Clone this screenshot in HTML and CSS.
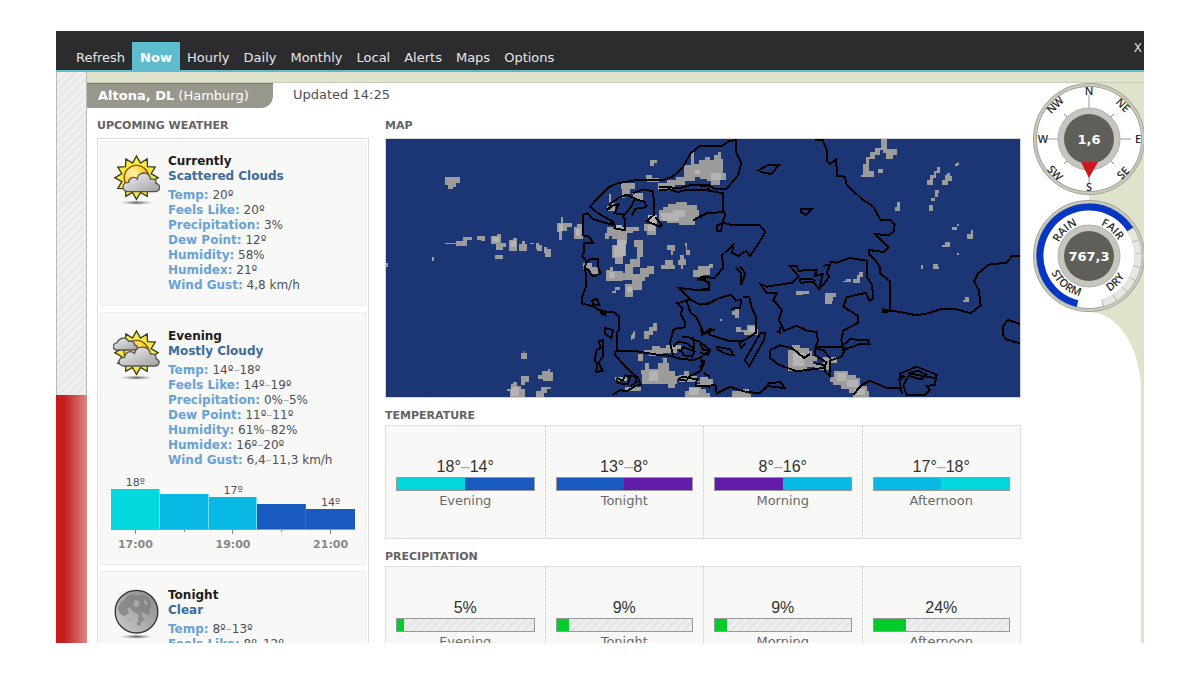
FILE: index.html
```
<!DOCTYPE html>
<html lang="en">
<head>
	<meta charset="utf-8">
	<title>Weather - Altona, DL</title>
	<link rel="stylesheet" href="styles.css">
</head>
<body>
<div id="app">
	<header id="toolbar">
		<nav>
			<a href="#refresh">Refresh</a>
			<a href="#now" class="active">Now</a>
			<a href="#hourly">Hourly</a>
			<a href="#daily">Daily</a>
			<a href="#monthly">Monthly</a>
			<a href="#local">Local</a>
			<a href="#alerts">Alerts</a>
			<a href="#maps">Maps</a>
			<a href="#options">Options</a>
		</nav>
		<button type="button" id="close">X</button>
	</header>
	<div id="page">
		<div id="rail">
			<div class="stripes"></div>
			<div class="red"></div>
		</div>
		<main id="sheet">
			<div id="content">
				<div id="location_bar">
					<h1><b>Altona, DL</b> (Hamburg)</h1>
					<span id="updated">Updated 14:25</span>
				</div>
				<div id="columns">
					<section id="upcoming">
						<h2>Upcoming Weather</h2>
						<div class="list">
							<article class="card">
								<div class="forecast">
									<svg class="icon" viewBox="-70 -68 140 156">
										<defs>
											<radialGradient id="sun" cx="35%" cy="30%" r="75%">
												<stop offset="0" stop-color="#fff6c0"/><stop offset=".5" stop-color="#ffd53a"/><stop offset="1" stop-color="#f39a10"/>
											</radialGradient>
											<linearGradient id="cloud" x2="1" y2="1">
												<stop offset="0" stop-color="#f2f2f2"/><stop offset="1" stop-color="#a0a0a0"/>
											</linearGradient>
											<radialGradient id="shade">
												<stop offset="0" stop-color="#555"/><stop offset="1" stop-color="#999" stop-opacity="0"/>
											</radialGradient>
											<path id="rays" d="M0-65L12-44L32-56L33-33L56-32L44-12L65 0L44 12L56 32L33 33L32 56L12 44L0 65L-12 44L-32 56L-33 33L-56 32L-44 12L-65 0L-44-12L-56-32L-33-33L-32-56L-12-44Z"/>
											<path id="puff" d="M-24 42C-46 42-46 14-24 14C-22-2-6-4 2 4C4-18 38-22 42 4C58 2 60 12 58 17C76 20 72 42 54 42Z"/>
										</defs>
										<ellipse cy="75" rx="50" ry="7" fill="url(#shade)"/>
										<use href="#rays" fill="#fbe93f" stroke="#3c3a20" stroke-width="4"/>
										<circle r="37" fill="url(#sun)" stroke="#7a5200" stroke-width="4"/>
										<use href="#puff" fill="url(#cloud)" stroke="#555" stroke-width="4"/>
									</svg>
									<div class="details">
										<h3>Currently</h3>
										<h4>Scattered Clouds</h4>
										<dl>
											<div><dt>Temp:</dt> <dd>20º</dd></div>
											<div><dt>Feels Like:</dt> <dd>20º</dd></div>
											<div><dt>Precipitation:</dt> <dd>3%</dd></div>
											<div><dt>Dew Point:</dt> <dd>12º</dd></div>
											<div><dt>Humidity:</dt> <dd>58%</dd></div>
											<div><dt>Humidex:</dt> <dd>21º</dd></div>
											<div><dt>Wind Gust:</dt> <dd>4,8 km/h</dd></div>
										</dl>
									</div>
								</div>
							</article>
							<article class="card">
								<div class="forecast">
									<svg class="icon" viewBox="-70 -68 140 156">
										<ellipse cy="75" rx="50" ry="7" fill="url(#shade)"/>
										<use href="#rays" fill="#fbe93f" stroke="#3c3a20" stroke-width="4"/>
										<circle r="37" fill="url(#sun)" stroke="#7a5200" stroke-width="4"/>
										<path d="M-60-8C-74-10-72-28-58-30C-52-46-30-48-24-34C-12-38-4-28-6-23C6-22 6-8-4-8Z" fill="url(#cloud)" stroke="#555" stroke-width="4"/>
										<path d="M-38 40C-60 38-56 14-36 14C-32-6-14-6-6 2C0-24 38-22 42 4C56 2 60 12 58 18C74 24 68 40 54 40Z" fill="url(#cloud)" stroke="#555" stroke-width="4"/>
									</svg>
									<div class="details">
										<h3>Evening</h3>
										<h4>Mostly Cloudy</h4>
										<dl>
											<div><dt>Temp:</dt> <dd>14º<i>–</i>18º</dd></div>
											<div><dt>Feels Like:</dt> <dd>14º<i>–</i>19º</dd></div>
											<div><dt>Precipitation:</dt> <dd>0%<i>–</i>5%</dd></div>
											<div><dt>Dew Point:</dt> <dd>11º<i>–</i>11º</dd></div>
											<div><dt>Humidity:</dt> <dd>61%<i>–</i>82%</dd></div>
											<div><dt>Humidex:</dt> <dd>16º<i>–</i>20º</dd></div>
											<div><dt>Wind Gust:</dt> <dd>6,4<i>–</i>11,3 km/h</dd></div>
										</dl>
									</div>
								</div>
								<div class="chart">
									<div class="hour"><span>18º</span><div class="bar aqua" style="height:40px"></div></div>
									<div class="hour"><div class="bar sky" style="height:35px"></div></div>
									<div class="hour"><span>17º</span><div class="bar sky" style="height:32px"></div></div>
									<div class="hour"><div class="bar blue" style="height:25px"></div></div>
									<div class="hour"><span>14º</span><div class="bar blue" style="height:20px"></div></div>
								</div>
								<div class="axis">
									<span class="tick">17:00</span>
									<span></span>
									<span class="tick">19:00</span>
									<span></span>
									<span class="tick">21:00</span>
								</div>
							</article>
							<article class="card">
								<div class="forecast">
									<svg class="icon" viewBox="-70 -68 140 156">
										<defs>
											<linearGradient id="moon" x1="1" x2="0" y2="1">
												<stop offset="0" stop-color="#888"/><stop offset="1" stop-color="#ccc"/>
											</linearGradient>
										</defs>
										<ellipse cy="75" rx="50" ry="7" fill="url(#shade)"/>
										<circle r="64" fill="url(#moon)" stroke="#333" stroke-width="4"/>
										<path d="M-36-36C-28-52-8-56 4-48C24-56 48-40 44-14L38-6L42 8C30 12 26 2 14 2L18 16L24 22L10 36L4 22L8 8L-10 2L-20-14L-28-8L-22 4L-36 14L-50 6L-56-10L-48-28ZM4 28L14 38L6 44L0 36Z" fill="#7c7c7c" opacity=".7"/>
										<path d="M-4-36L10-30L4-14L-10-18ZM22-38L34-24L26-20ZM-24 20L-14 26L-22 34Z" fill="#aaa"/>
									</svg>
									<div class="details">
										<h3>Tonight</h3>
										<h4>Clear</h4>
										<dl>
											<div><dt>Temp:</dt> <dd>8º<i>–</i>13º</dd></div>
											<div><dt>Feels Like:</dt> <dd>8º<i>–</i>12º</dd></div>
										</dl>
									</div>
								</div>
							</article>
						</div>
					</section>
					<div id="overview">
						<section>
							<h2>Map</h2>
							<svg id="map" viewBox="18 27 1902 774" preserveAspectRatio="none" shape-rendering="crispEdges">
								<rect x="18" y="27" width="1902" height="774" fill="#1c3575"/>
								<!-- clouds, west -->
								<g fill="#9c9c9c">
									<path d="M195 141H240V158H228V170H220V178H203V165H195ZM195 338H228V332H250V320H276V330H262V348H228V342H195ZM290 318H316V334H302V330H290ZM334 318H350V313H362V340H378V352H370V360H348V342H334ZM346 374H368V387H346ZM386 330H400V324H412V362H386ZM418 343H426V333H434V343H442V362H418ZM450 338H462V342H450ZM468 340H478V346H486V362H472V356H468ZM492 350H502V358H512V382H494V370H492Z"/>
									<path d="M532 280H544V262H549V280H575V292H560V304H545V330H538V306H532ZM582 290H592V282H610V326H582ZM18 400H24V412H18ZM157 382H163V394H157ZM810 90H830V100H822V108H810ZM798 136H816V144H838V156H800ZM424 678V670H432V664H436V670H442V686H424ZM424 738H448V756H434V764H424ZM474 736H486V724H504V718H510V726H518V752H490V746H474ZM382 776H392V762H398V756H410V768H424V778H434V801H390V784H382ZM468 784H482V770H512V778H500V790H492V801H468Z"/>
									<path d="M686 192H694V220H704V244H680V228H686ZM722 160H764V178H750V192H736V204H726V178H722ZM756 188H790V210H764ZM834 176V158H862V150H888V140H912V104H934V66H942V102H958V90H976V82H990V148H964V140H944V154H916V166H884V178H860V184H838ZM836 240H850V230H864V222H888V216H920V224H950V240H958V262H944V284H896V278H860V272H838Z"/>
									<path d="M674 310H682V292H700V298H720V290H778V304H760V310H742V342H738V378H730V402H706V384H696V346H712V326H696V318H686V328H674ZM792 282H808V254H830V286H828V316H802V304H792ZM762 330H790V382H780V410H760V432H780V414H800V408H822V432H808V440H796V452H786V480H758V500H736V462H756V450H730V430H736V402H750V386H770V350H762ZM678 420H690V412H700V424H728V454H678ZM697 484H706V470H720V480H708V490H697ZM608 398H636V412H654V432H630V418H608Z"/>
									<path d="M862 344H886V364H880V374H872V360H862ZM916 338H922V360H930V376H918ZM894 390H900V376H912V388H918V406H908V418H902V406H894ZM844 404H856V390H880V404H886V418H844ZM938 420H954V408H990V436H964V440H938ZM752 618L764 602V624L754 630ZM792 604H808V590H820V580H830V604H818V616H808V628H792ZM774 672H790V692H774ZM792 660H816V648H840V654H858V644H902V656H890V668H850V678H808V668H792ZM784 720H796V700H806V716H834V700H850V688H846V684H862V700H868V722H884V738H896V750H892V762H884V774H864V762H846V762H786ZM896 736H912V724H926V738H950V752H990V766H960V756H896ZM914 784H928V770H944V762H964V776H978V788H990V801H914ZM706 740H740V752H706ZM734 770H784V782H734Z"/>
								</g>
								<g fill="#b4b4b4">
									<path d="M710 330H738V350H734V374H712ZM702 348H728V380H702ZM686 426H706V444H686ZM740 470H756V486H740ZM804 256H828V280H804ZM840 250H880V240H916V262H896V272H850ZM394 332H408V350H394ZM340 322H358V336H340ZM538 282H550V302H538ZM588 296H600V318H588ZM394 770H416V798H394ZM706 286H726V298H706ZM808 724H834V752H808ZM944 120H976V132H944ZM928 774H956V796H928ZM804 284H824V302H804Z"/>
								</g>
								<!-- clouds, east -->
								<g transform="translate(960)" fill="#9c9c9c">
									<path d="M20 100H30V90H42V76H54V66H64V88H68V130H78V150H60V166H34V154H22V146H0V114H20ZM0 408H26V402H40V414H28V428H10V438H0ZM96 544H104V536H118V564H106V556H96ZM60 566H66V572H60ZM108 592H124V600H142V584H168V598H174V616H132V606H108ZM0 740H24V748H38V764H0ZM97 784H130V776H148V792H154V801H97Z"/>
									<path d="M542 27H560V58H592V76H580V88H558V70H548V60H540V76H524V88H508V124H522V142H484V134H490V102H498V82H510V66H524V54H542ZM534 116H548V128H534ZM680 150H690V134H702V122H712V110H720V130H708V144H700V164H680ZM726 150H734V136H740V128H750V138H756V154H744V166H726ZM764 104L776 96V104L768 110ZM706 180H718V190H714V200H706ZM694 204H706V212H694ZM586 230H592V216H600V242H586ZM688 224H700V242H688ZM756 292H770V300H756ZM770 282H776V288H770ZM802 312H812V300H820V326H802ZM726 344H734V337H750V350H726ZM770 370H776V376H770ZM662 406H668V418H662ZM700 402H714V410H718V418H700ZM788 510H796V502H808V516H788Z"/>
									<path d="M428 452H438V446H452V456H428ZM460 446H470V434H478V426H490V440H480V458H460ZM288 482H326V492H308V496H288ZM376 490H408V502H400V514H396V522H376ZM264 660H276V644H300V654H328V664H336V678H350V692H340V702H370V680H410V700H388V720H346V710H322V722H264ZM390 740H402V722H444V734H468V744H480V768H500V782H508V801H458V788H446V778H424V766H398V756H390Z"/>
									<path fill="#b4b4b4" d="M34 128H64V150H34ZM280 668H312V708H280ZM146 590H166V606H146ZM410 728H438V754H410ZM440 750H474V772H440ZM464 776H494V796H464Z"/>
								</g>
								<!-- coastlines, west -->
								<g class="coast">
									<path d="M990 48H960L932 70L908 112L878 140L850 150H770L712 160L686 172L664 194L630 230L652 248L690 270L696 284L640 268L624 250L610 254V316L628 320L640 340L612 338V368L606 378L618 392L616 410L618 470L606 500V520L640 530L668 546L700 546L716 558V600L710 610V662L770 664L832 674L880 678L870 640L880 600L896 594L914 592V576L902 552L908 534L890 520L912 514L930 508L896 474L950 480L990 476"/>
									<path d="M688 240L690 222L716 204L740 194L766 206L752 232L734 254L704 250L716 222L700 226L680 240M690 268L702 280L706 296L734 300V266L726 256M758 190L790 178L820 184L822 254L800 274L840 290L846 284L826 262M836 180L870 178L892 186L920 180H950L990 178M838 170L900 174L930 166L990 164M756 256L766 236L790 234L800 226L790 214L766 208M940 272L960 258L990 246"/>
									<path d="M618 400L630 388H654V410L662 430L640 440L628 424L612 410M636 512L650 506L658 524L640 524ZM660 540L676 544V556L664 550ZM676 594L700 600L694 624L676 612ZM668 630L656 634L662 654L650 660L644 690L652 704L648 726L668 722L656 698L668 680ZM706 664V676L740 714L774 744L782 764L766 768L740 784L720 780L698 796M710 744L728 752L736 736L750 742L744 762L714 760L708 748M740 740L764 736L770 756L750 770M920 514L932 548L948 560L960 584L966 614L990 604M930 508L960 524L990 520M952 446L972 448L990 466M950 450L990 440"/>
									<path d="M880 650L896 634L920 640L942 656L940 624L906 620M896 664L912 652L944 664L936 680L912 676L900 658M880 680L900 686L940 690L960 684L990 660L960 636L930 624M960 690L972 700L960 724L930 738L918 752L896 748L906 740L950 748L948 768L990 770M972 730L990 740"/>
								</g>
								<!-- coastlines, east -->
								<g class="coast" transform="translate(960)">
									<path d="M0 48H66L86 34L108 30V66L124 100L114 136L80 176L48 178L30 168H0M0 178L40 184L70 190V244L76 256L66 280L50 288L52 304L64 302L66 278L92 284H178L196 306L176 340L150 378L138 362L116 378L96 368L100 344L66 376L70 412L44 444L0 440M0 262L20 250L70 246M0 448L26 456V480H0M170 124L206 104L236 106L214 132L180 126M302 236H336L318 254L304 248Z"/>
									<path d="M346 30H368L380 60V94L390 102L408 88L412 138L434 140L440 164L486 208L520 230L542 270H572L584 284L582 304L566 316L526 312L566 352L552 366L506 360V372L524 388L540 412V430L570 454V544L550 546V538L600 546L650 556L684 550L720 538H770L812 550L842 526L836 480L822 454L834 430L866 404L920 398L936 378H960M960 582L924 570L908 590V612L918 628L960 640"/>
									<path d="M386 396L410 398L448 384L500 392V440L516 464L520 506L508 512L498 488L440 502L430 530L474 558V578L430 602L424 630L430 660L480 642H508L504 630L450 628L424 650L380 650L346 652L354 632L350 606L322 602L290 588L252 602L236 570L246 540L220 510L230 490L200 490L182 462L200 470L278 458L296 440L270 408H290L296 422L350 420L344 438L368 432L358 478L340 456L302 458L300 446H336L346 454M368 408L390 404L380 430L388 440L364 472M0 524L30 518L60 504L94 494L108 512L124 510L120 534L92 536M130 500L148 500L154 530L168 560V608L150 620L130 632L84 632L28 614L30 600L46 598M120 410L136 430L124 464V430L108 414M0 584L12 610L30 596L46 602M230 602L240 610V592"/>
									<path d="M196 608L182 608L134 692L148 708L192 630ZM132 630L118 640L124 654L136 640M50 650L90 658L102 676L78 672L52 658ZM0 640L10 660L30 662L24 674L0 668M0 690L12 694L0 712M210 660L240 646L276 654L312 684L330 672M210 660V684L236 704L290 724L370 714L380 698L346 676L344 656L370 660L394 690L424 680L440 650M390 690V738L376 726V706L346 700M0 768L46 766L50 790L90 770L130 784L180 790L200 768L254 774L242 756L206 760L196 778M460 794L486 764L510 752L560 774H600L606 790L598 750L612 740L600 736V750M598 732L650 710L710 734L704 764L680 768L690 780L674 796H620L610 766L626 738L664 748L678 734L656 722L624 730L704 744"/>
								</g>
							</svg>
						</section>
						<section>
							<h2>Temperature</h2>
							<div class="periods">
								<div class="period"><strong>18°<i>–</i>14°</strong><div class="meter"><div class="aqua"></div><div class="blue"></div></div><span>Evening</span></div>
								<div class="period"><strong>13°<i>–</i>8°</strong><div class="meter"><div class="blue"></div><div class="purple"></div></div><span>Tonight</span></div>
								<div class="period"><strong>8°<i>–</i>16°</strong><div class="meter"><div class="purple"></div><div class="sky"></div></div><span>Morning</span></div>
								<div class="period"><strong>17°<i>–</i>18°</strong><div class="meter"><div class="sky"></div><div class="aqua"></div></div><span>Afternoon</span></div>
							</div>
						</section>
						<section>
							<h2>Precipitation</h2>
							<div class="periods">
								<div class="period"><strong>5%</strong><div class="meter rain"><div style="width:5%"></div></div><span>Evening</span></div>
								<div class="period"><strong>9%</strong><div class="meter rain"><div style="width:9%"></div></div><span>Tonight</span></div>
								<div class="period"><strong>9%</strong><div class="meter rain"><div style="width:9%"></div></div><span>Morning</span></div>
								<div class="period"><strong>24%</strong><div class="meter rain"><div style="width:24%"></div></div><span>Afternoon</span></div>
							</div>
						</section>
					</div>
				</div>
			</div>
			<aside id="gauges">
				<svg class="gauge" viewBox="-56 -56 112 112">
					<circle r="54" fill="#fff" stroke="#a3a497" stroke-width="4"/>
					<circle r="54" fill="none" stroke="#cbccc0" stroke-width="2"/>
					<path d="M0-44V44M-42 0H42M-25-25L25 25M-25 25L25-25" stroke="#999"/>
					<circle r="31" fill="#c6c6be" stroke="#b2b2a9"/>
					<circle r="25" fill="#5f5f5a"/>
					<path d="M-8 23H9L0 39Z" fill="#c81a1e"/>
					<g class="points">
						<text y="-44">N</text>
						<text x="49" y="4">E</text>
						<text y="52">S</text>
						<text x="-46" y="4">W</text>
						<text transform="rotate(45)translate(0 -44)">NE</text>
						<text transform="rotate(-45)translate(0 -44)">NW</text>
						<text transform="rotate(45)translate(0 52)">SW</text>
						<text transform="rotate(-45)translate(0 52)">SE</text>
					</g>
					<text class="reading" y="5">1,6</text>
				</svg>
				<svg class="gauge" viewBox="-56 -56 112 112">
					<defs>
						<path id="upper" d="M-33 0A33 33 0 0 1 33 0"/>
						<path id="lower" d="M-41 0A41 41 0 0 0 41 0"/>
					</defs>
					<circle r="54" fill="#fff" stroke="#a3a497" stroke-width="4"/>
					<circle r="54" fill="none" stroke="#cbccc0" stroke-width="2"/>
					<g fill="none" stroke-width="7">
						<path d="M-11.5 47.6A49 49 0 1 1 41.3-26.3" stroke="#0536c4"/>
						<path d="M41.3-26.3A49 49 0 0 1 13.1 47.2" stroke="#bcbdb3"/>
						<path d="M41.3-26.3A49 49 0 0 1 13.1 47.2" stroke="#e6e7e0" stroke-dasharray="12 1"/>
					</g>
					<circle r="31" fill="#c6c6be" stroke="#b2b2a9"/>
					<circle r="25" fill="#5f5f5a"/>
					<g class="points">
						<text><textPath href="#upper" startOffset="26%">RAIN</textPath></text>
						<text><textPath href="#upper" startOffset="73%">FAIR</textPath></text>
						<text><textPath href="#lower" startOffset="28%">STORM</textPath></text>
						<text><textPath href="#lower" startOffset="75%">DRY</textPath></text>
					</g>
					<text class="reading" y="5">767,3</text>
				</svg>
				<div class="curve"></div>
			</aside>
		</main>
	</div>
</div>
</body>
</html>
```

FILE: styles.css
```
* {
	box-sizing: border-box;
}
body {
	margin: 0;
	padding: 31px 56px 32px;
	background-color: white;
	color: #4d5057;
	font-family: Verdana, "DejaVu Sans", sans-serif;
	font-size: 13px;
}
h1, h2, h3, h4, dl, dd {
	margin: 0;
	font-size: inherit;
}
i {
	color: #aaa;
	font-style: normal;
}

#app {
	display: flex;
	flex-direction: column;
	height: calc(100vh - 63px);
	overflow: hidden;
}

/* toolbar */
#toolbar {
	display: flex;
	flex: none;
	justify-content: space-between;
	height: 41px;
	padding-left: 13px;
	background-color: #2c2c2e;
	border-bottom: 2px solid #5fbccf;
}
nav {
	display: flex;
	align-self: flex-end;
}
nav a {
	height: 28px;
	padding: 2px 7px 0;
	color: #e6e6e6;
	line-height: 28px;
	text-decoration: none;
}
nav a.active {
	padding: 2px 8px 0;
	background-color: #5fbccf;
	color: white;
	font-weight: bold;
}
#close {
	padding: 0 2px 6px;
	border: 0;
	background: none;
	color: #ddd;
	font-family: inherit;
	font-size: 12px;
}

#page {
	display: flex;
	flex: 1;
	min-height: 0;
}
#rail {
	display: flex;
	flex-direction: column;
	flex: none;
	width: 31px;
}
.stripes {
	flex: 323;
	border: solid #bbb;
	border-width: 0 1px;
	background: repeating-linear-gradient(135deg, #e9e9e9 0 3px, #f0f0f0 3px 6px);
}
.red {
	flex: 248;
	background: linear-gradient(to right, #c51d1c 25%, #dc8585);
}
#sheet {
	display: flex;
	flex: 1;
	min-width: 0;
	padding-top: 10px;
	background-color: #dfe3cb;
}
#content {
	flex: 1;
	min-width: 0;
	padding-right: 12px;
	border-top: 1px solid #c9ccb4;
	background-color: white;
}

#location_bar {
	display: flex;
	line-height: 24px;
}
h1 {
	width: 186px;
	height: 25px;
	padding-left: 11px;
	border-top: 1px solid #7d7c72;
	border-radius: 0 0 12px 0;
	background-color: #98978c;
	color: white;
	font-weight: normal;
	line-height: 23px;
	white-space: nowrap;
}
#updated {
	padding-left: 20px;
}

#columns {
	display: flex;
	gap: 16px;
	padding-left: 10px;
}
#upcoming {
	flex: none;
	width: 272px;
}
#overview {
	flex: 1;
	min-width: 0;
}
h2 {
	padding: 10px 0 1px;
	color: #636363;
	font-size: 11px;
	line-height: 16px;
	text-transform: uppercase;
}
#upcoming h2, #overview section:first-child h2 {
	padding-bottom: 4px;
}

/* upcoming weather */
.list {
	display: flex;
	flex-direction: column;
	gap: 6px;
	padding: 2px;
	border: 1px solid #ddd;
}
.card {
	padding: 12px 10px;
	border: 1px solid #eee;
	background-color: #f8f8f6;
	font-size: 12px;
	line-height: 15px;
}
.card + .card {
	padding-top: 16px;
}
.forecast {
	display: flex;
	gap: 8px;
}
.icon {
	flex: none;
	width: 47px;
	height: 52px;
	margin: 1px 0 0 2px;
}
h3 {
	color: #1c1c1c;
}
h4 {
	color: #3b6c9c;
}
dl {
	padding-top: 4px;
}
dt, dd {
	display: inline;
}
dt {
	color: #68a2d6;
	font-weight: bold;
}
.chart {
	display: grid;
	grid-template-columns: repeat(5, 1fr);
	align-items: end;
	height: 62px;
	border-bottom: 1px solid #999;
}
.hour {
	font-size: 11px;
	line-height: 13px;
	text-align: center;
}
.bar {
	border-right: 1px solid #7adcf0;
}
.bar.blue {
	border-right-color: #2d6fe0;
}
.hour:last-child .bar {
	border-right: 0;
}
.axis {
	display: grid;
	grid-template-columns: repeat(5, 1fr);
	color: #888;
	font-size: 11px;
	font-weight: bold;
}
.axis span {
	display: flex;
	flex-direction: column;
	align-items: center;
}
.axis span:before {
	content: "";
	width: 1px;
	height: 2px;
	background-color: #888;
}
.axis .tick:before {
	height: 4px;
	margin-bottom: 3px;
}

.aqua { background-color: #02d8de; }
.sky { background-color: #08b9e3; }
.blue { background-color: #195abf; }
.purple { background-color: #631ca8; }

/* map and meters */
#map {
	display: block;
	width: 100%;
	height: 260px;
	border: 1px solid #d4d4d8;
}
.coast {
	fill: none;
	stroke: black;
	stroke-width: 6px;
}
.periods {
	display: grid;
	grid-template-columns: repeat(4, 1fr);
	border: 1px solid #ddd;
	background-color: #f8f8f6;
}
.period {
	padding: 31px 10px 27px;
	line-height: 20px;
	text-align: center;
	color: #6a6a6a;
}
.period + .period {
	border-left: 1px dotted #ccc;
}
.period strong {
	display: block;
	color: #333;
	font: 16px/20px "Liberation Sans", Arial, sans-serif;
}
.meter {
	display: flex;
	height: 14px;
	border: 1px solid #999;
}
.meter div {
	flex: 1;
}
.meter.rain {
	background: repeating-linear-gradient(135deg, #e6e6e6 0 3px, #eee 3px 6px);
}
.meter.rain div {
	flex: none;
	background-color: #02cc2a;
}

/* gauges */
#gauges {
	display: flex;
	flex-direction: column;
	flex: none;
	gap: 5px;
	width: 111px;
	border-top: 1px solid #c9ccb4;
	background: linear-gradient(to right, white 56px, transparent 56px);
}
.gauge {
	flex: none;
	width: 112px;
	height: 112px;
}
.points {
	fill: #2b2b2b;
	font-family: "Open Sans", sans-serif;
	font-size: 11px;
	font-weight: 600;
	text-anchor: middle;
}
.reading {
	fill: white;
	font-weight: bold;
	text-anchor: middle;
}
.curve {
	flex: 1;
	margin: -5px 3px 0 0;
	border-radius: 0 52px 0 0 / 0 80px 0 0;
	background-color: white;
}
```
